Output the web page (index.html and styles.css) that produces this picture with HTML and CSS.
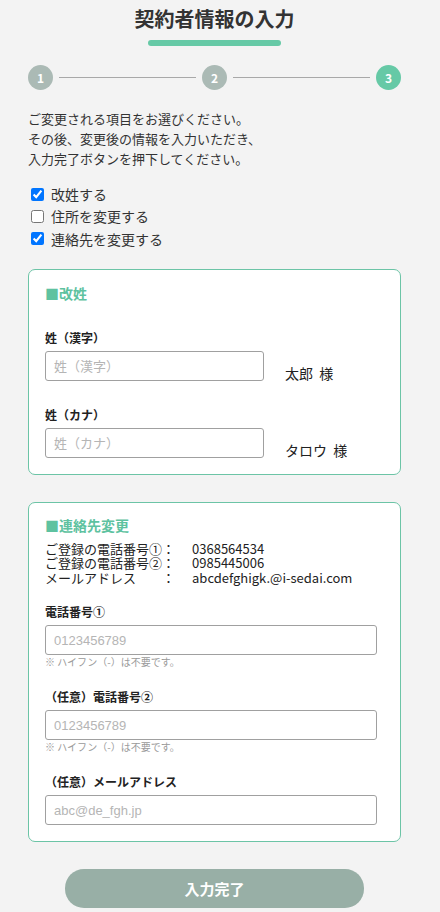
FILE: index.html
```html
<!DOCTYPE html>
<html lang="ja">
<head>
<meta charset="utf-8">
<title>契約者情報の入力</title>
<link rel="stylesheet" href="styles.css">
</head>
<body>
<main class="page">
  <h1 class="title">契約者情報の入力</h1>
  <div class="title-bar"></div>

  <div class="steps">
    <span class="step">1</span>
    <span class="step-line"></span>
    <span class="step">2</span>
    <span class="step-line"></span>
    <span class="step step-active">3</span>
  </div>

  <p class="intro">ご変更される項目をお選びください。<br>その後、変更後の情報を入力いただき、<br>入力完了ボタンを押下してください。</p>

  <div class="choices">
    <label class="choice"><input type="checkbox" checked><span>改姓する</span></label>
    <label class="choice"><input type="checkbox"><span>住所を変更する</span></label>
    <label class="choice"><input type="checkbox" checked><span>連絡先を変更する</span></label>
  </div>

  <section class="card card-name">
    <h2 class="card-title">■改姓</h2>
    <div class="field field-first">
      <div class="field-label">姓（漢字）</div>
      <div class="name-row">
        <input class="text-input name-input" type="text" placeholder="姓（漢字）">
        <span class="name-rest">太郎&nbsp;&nbsp;様</span>
      </div>
    </div>
    <div class="field field-next">
      <div class="field-label">姓（カナ）</div>
      <div class="name-row">
        <input class="text-input name-input" type="text" placeholder="姓（カナ）">
        <span class="name-rest">タロウ&nbsp;&nbsp;様</span>
      </div>
    </div>
  </section>

  <section class="card card-contact">
    <h2 class="card-title">■連絡先変更</h2>
    <div class="current">
      <span class="cur-label">ご登録の電話番号①</span><span class="cur-colon">：</span><span class="cur-value">0368564534</span>
      <span class="cur-label">ご登録の電話番号②</span><span class="cur-colon">：</span><span class="cur-value">0985445006</span>
      <span class="cur-label">メールアドレス</span><span class="cur-colon">：</span><span class="cur-value">abcdefghigk.@i-sedai.com</span>
    </div>
    <div class="field contact-first">
      <div class="field-label">電話番号①</div>
      <input class="text-input wide-input" type="text" placeholder="0123456789">
      <div class="hint">※ ハイフン（-）は不要です。</div>
    </div>
    <div class="field contact-next">
      <div class="field-label">（任意）電話番号②</div>
      <input class="text-input wide-input" type="text" placeholder="0123456789">
      <div class="hint">※ ハイフン（-）は不要です。</div>
    </div>
    <div class="field contact-next">
      <div class="field-label">（任意）メールアドレス</div>
      <input class="text-input wide-input" type="text" placeholder="abc@de_fgh.jp">
    </div>
  </section>

  <div class="actions">
    <button class="submit" type="button">入力完了</button>
  </div>
</main>
</body>
</html>
```
FILE: styles.css
```css
* {
  box-sizing: border-box;
}

html, body {
  margin: 0;
  padding: 0;
  background: #f3f3f3;
}

body {
  font-family: "Noto Sans CJK JP", "Noto Sans", sans-serif;
  color: #333333;
}

.page {
  width: 373px;
  margin: 0 0 0 28px;
  padding-top: 4px;
  display: flex;
  flex-direction: column;
}

.title {
  margin: 0;
  font-size: 20px;
  line-height: 30px;
  font-weight: 700;
  text-align: center;
  color: #333333;
}

.title-bar {
  align-self: center;
  width: 133px;
  height: 6px;
  margin-top: 6px;
  border-radius: 3px;
  background: #66c9a6;
}

.steps {
  display: flex;
  align-items: center;
  margin-top: 19px;
  height: 25px;
}

.step {
  width: 25px;
  height: 25px;
  flex: 0 0 25px;
  border-radius: 50%;
  background: #abbab5;
  color: #ffffff;
  font-size: 12px;
  font-weight: 700;
  line-height: 25px;
  text-align: center;
}

.step-active {
  background: #66c9a6;
}

.step-line {
  flex: 1;
  height: 1px;
  margin: 0 6px;
  background: #a8a8a8;
}

.intro {
  margin: 19px 0 0;
  font-size: 13px;
  line-height: 20px;
  color: #333333;
}

.choices {
  margin-top: 14px;
  display: flex;
  flex-direction: column;
}

.choice {
  display: flex;
  align-items: center;
  height: 22.3px;
  font-size: 14px;
  line-height: 22px;
  color: #333333;
}

.choice input {
  width: 13px;
  height: 13px;
  margin: 0 7px 0 3px;
}

.card {
  margin-top: 19px;
  background: #ffffff;
  border: 1px solid #6cc4a6;
  border-radius: 7px;
  padding: 13px 16px 16px;
}

.card-contact {
  margin-top: 27px;
  padding-top: 12px;
}

.card-title {
  margin: 0;
  font-size: 14px;
  line-height: 20px;
  font-weight: 700;
  color: #5ec2a0;
}

.field-label {
  font-size: 12px;
  line-height: 18px;
  font-weight: 700;
  color: #222222;
  margin-bottom: 4px;
}

.field-first {
  margin-top: 26px;
}

.field-next {
  margin-top: 25px;
}

.name-row {
  display: flex;
  align-items: flex-start;
  height: 30px;
}

.text-input {
  display: block;
  height: 30px;
  border: 1px solid #a0a0a0;
  border-radius: 3px;
  background: #ffffff;
  padding: 0 8px;
  font-family: "Liberation Sans", "Noto Sans CJK JP", sans-serif;
  font-size: 13px;
  color: #333333;
  outline: none;
}

.text-input::placeholder {
  color: #b5b5b5;
}

.name-input {
  width: 219px;
  font-family: "Noto Sans CJK JP", sans-serif;
}

.name-rest {
  margin: 14px 0 0 21px;
  font-size: 14px;
  line-height: 16px;
  color: #222222;
}

.current {
  margin-top: 7px;
  display: grid;
  grid-template-columns: max-content max-content 1fr;
  font-size: 13px;
  line-height: 14.5px;
  color: #222222;
}

.cur-colon {
  padding-right: 17px;
}

.contact-first {
  margin-top: 18px;
}

.contact-next {
  margin-top: 19px;
}

.wide-input {
  width: 332px;
}

.hint {
  font-size: 10px;
  line-height: 14px;
  color: #9a9a9a;
}

.actions {
  margin-top: 27px;
  display: flex;
  justify-content: center;
}

.submit {
  width: 299px;
  height: 39px;
  border: none;
  border-radius: 19px;
  background: #98afa6;
  color: #ffffff;
  font-family: "Noto Sans CJK JP", sans-serif;
  font-size: 15px;
  font-weight: 700;
  cursor: pointer;
}
```
